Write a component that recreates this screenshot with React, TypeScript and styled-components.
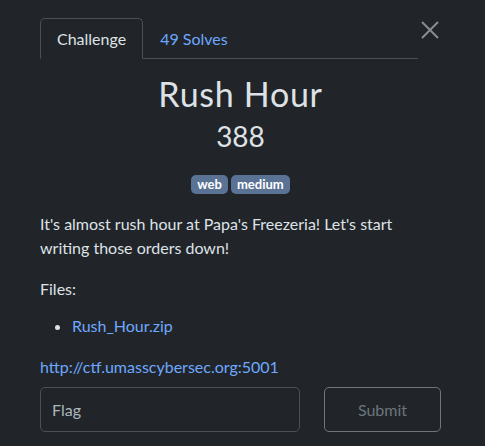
import React from "react";
import styled, { createGlobalStyle } from "styled-components";

const Global = createGlobalStyle`
  html, body { margin: 0; padding: 0; background: #212529; }
  body { font-family: Lato, "Open Sans", sans-serif; color: #dee2e6; }
  * { box-sizing: border-box; }
`;

const Modal = styled.div`
  width: 485px;
  height: 446px;
  padding: 18px 44px 0 40px;
  position: relative;
  overflow: hidden;
`;

const Close = styled.button`
  position: absolute;
  top: 19px;
  right: 44px;
  width: 22px;
  height: 22px;
  padding: 0;
  border: 0;
  background: transparent;
  display: flex;
  align-items: center;
  justify-content: center;
`;

const Tabs = styled.div`
  display: flex;
  width: 378px;
  border-bottom: 1px solid #495057;
`;

const Tab = styled.div<{ $active?: boolean }>`
  padding: 0 16px;
  height: 41px;
  display: flex;
  align-items: center;
  font-size: 16px;
  margin-bottom: -1px;
  border: 1px solid ${(p) => (p.$active ? "#495057" : "transparent")};
  border-bottom-color: ${(p) => (p.$active ? "#212529" : "transparent")};
  border-radius: 5px 5px 0 0;
  color: ${(p) => (p.$active ? "#dee2e6" : "#6ea8fe")};
  background: ${(p) => (p.$active ? "#212529" : "transparent")};
`;

const Header = styled.div`
  display: flex;
  flex-direction: column;
  align-items: center;
  padding-top: 13px;
`;

const Title = styled.h1`
  margin: 0;
  font-size: 34px;
  font-weight: 400;
  line-height: 44px;
  letter-spacing: 0.7px;
`;

const Points = styled.div`
  font-size: 28px;
  font-weight: 400;
  line-height: 36px;
  margin-top: 2px;
`;

const TagRow = styled.div`
  display: flex;
  gap: 3px;
  margin-top: 21px;
`;

const Tag = styled.span`
  background: #5a7294;
  color: #fff;
  font-size: 13px;
  font-weight: 700;
  padding: 0 6px;
  height: 19px;
  line-height: 19px;
  border-radius: 5px;
`;

const Body = styled.div`
  margin-top: 18px;
  font-size: 16px;
  line-height: 24px;
`;

const P = styled.p<{ $gap: number }>`
  margin: 0 0 ${(p) => p.$gap}px;
`;

const List = styled.ul`
  margin: 0 0 17px;
  padding-left: 32px;
`;

const Link = styled.a`
  color: #6ea8fe;
  text-decoration: none;
`;

const FormRow = styled.div`
  display: flex;
  gap: 24px;
  margin-top: 8px;
`;

const Input = styled.div`
  width: 260px;
  height: 45px;
  border: 1px solid #495057;
  border-radius: 5px;
  display: flex;
  align-items: center;
  padding-left: 11px;
  color: #adb5bd;
  font-size: 16px;
`;

const Submit = styled.div`
  width: 117px;
  height: 45px;
  border: 1px solid #6c757d;
  border-radius: 5px;
  display: flex;
  align-items: center;
  justify-content: center;
  color: #6c757d;
  font-size: 16px;
`;

export default function App() {
  return (
    <>
      <Global />
      <Modal>
        <Close aria-label="close">
          <svg width="20" height="20" viewBox="0 0 20 20">
            <path d="M2 2 L18 18 M18 2 L2 18" stroke="#8a8d90" strokeWidth="2" />
          </svg>
        </Close>
        <Tabs>
          <Tab $active>Challenge</Tab>
          <Tab>49 Solves</Tab>
        </Tabs>
        <Header>
          <Title>Rush Hour</Title>
          <Points>388</Points>
          <TagRow>
            <Tag>web</Tag>
            <Tag>medium</Tag>
          </TagRow>
        </Header>
        <Body>
          <P $gap={17}>It's almost rush hour at Papa's Freezeria! Let's start writing those orders down!</P>
          <P $gap={13}>Files:</P>
          <List>
            <li><Link href="#">Rush_Hour.zip</Link></li>
          </List>
          <Link href="#">http://ctf.umasscybersec.org:5001</Link>
          <FormRow>
            <Input>Flag</Input>
            <Submit>Submit</Submit>
          </FormRow>
        </Body>
      </Modal>
    </>
  );
}
